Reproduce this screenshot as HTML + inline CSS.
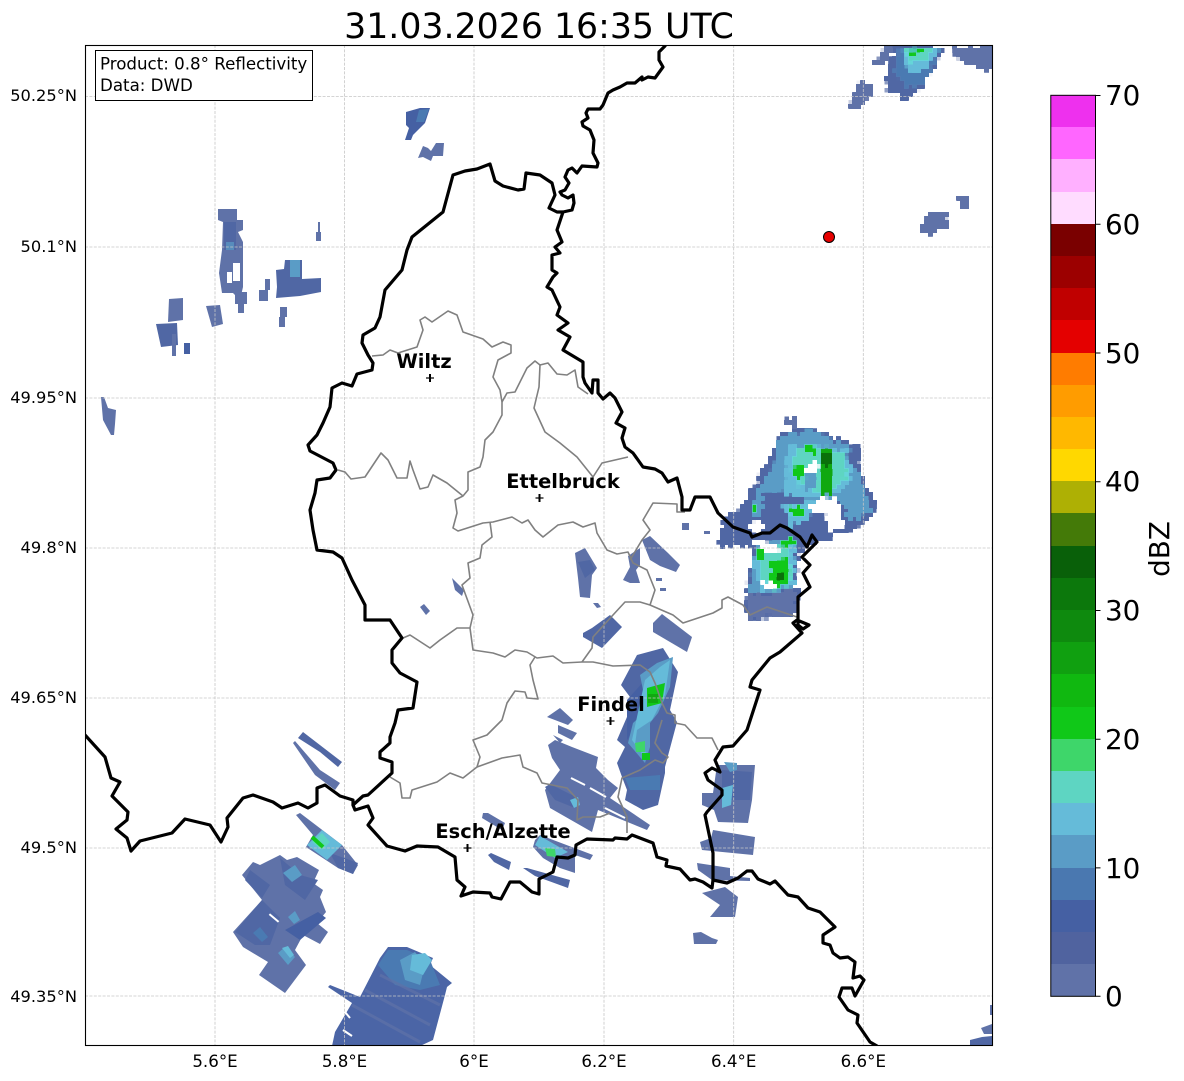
<!DOCTYPE html>
<html lang="en"><head><meta charset="utf-8"><title>Radar</title>
<style>
html,body{margin:0;padding:0;background:#fff}
svg{display:block}
text{font-family:"DejaVu Sans",sans-serif;fill:#000}
.t{font-size:16.67px}
.y{font-size:16.25px}
.c{font-size:19.44px;font-weight:bold}
.b{font-size:27.78px}
.a{fill:#5f72a8}.n{fill:#5067a4}.h{fill:#4560a3}.d{fill:#4a7ab2}.e{fill:#5a9cc6}.f{fill:#65bbd9}.g{fill:#5ed5c2}.l{fill:#3ed66a}.i{fill:#10c818}.j{fill:#10a810}.k{fill:#0a700a}.w{fill:#fff}
.bd{fill:none;stroke:#000;stroke-width:3.2;stroke-linejoin:round;stroke-linecap:round}
.gr{fill:none;stroke:#808080;stroke-width:1.6;stroke-linejoin:round}
.gl{stroke:#c6c6c6;stroke-width:.8;stroke-dasharray:3 1.4;fill:none}
</style></head><body>
<svg width="1184" height="1081" viewBox="0 0 1184 1081" xmlns="http://www.w3.org/2000/svg">
<defs>
<filter id="r" filterUnits="userSpaceOnUse" x="700" y="40" width="300" height="600" color-interpolation-filters="sRGB"><feTurbulence type="fractalNoise" baseFrequency=".16" numOctaves="1" seed="4" result="n"/><feDisplacementMap in="SourceGraphic" in2="n" scale="11" xChannelSelector="R" yChannelSelector="G" result="s"/><feFlood x="702" y="42" width="1" height="1" flood-color="#000"/><feComposite x="700" y="40" width="4" height="4"/><feTile x="700" y="40" width="300" height="600" result="p"/><feComposite in="s" in2="p" operator="in" x="700" y="40" width="300" height="600"/><feMorphology operator="dilate" radius="2" x="700" y="40" width="300" height="600"/></filter>
<clipPath id="ax"><rect x="85" y="45" width="908" height="1001"/></clipPath>
</defs>
<rect width="1184" height="1081" fill="#fff"/>
<text x="539" y="38" text-anchor="middle" style="font-size:34.72px">31.03.2026 16:35 UTC</text>

<g clip-path="url(#ax)">
<!-- pixelated storms -->
<g filter="url(#r)">
<polygon class="n" points="895,46 943,46 940,60 927,77 923,90 908,97 905,103 902,100 900,93 888,90 885,80 892,63"/>
<polygon class="d" points="898,50 940,47 931,66 924,82 906,88 895,72"/>
<polygon class="f" points="902,50 938,48 926,68 908,72"/>
<polygon class="g" points="906,50 934,48 925,62 910,62"/>
<polygon class="i" points="908,50 926,48 922,54 912,55"/>
<polygon class="a" points="950,46 992,46 992,70 975,68 957,57"/>
<polygon class="a" points="890,47 872,62 880,66 890,56"/>
<polygon class="a" points="850,107 858,82 873,88 870,98 860,107"/>
<polygon class="a" points="918,232 930,212 947,212 945,228 925,236"/>
<rect class="a" x="960" y="198" width="9" height="9"/>
<rect class="a" x="787" y="417" width="9" height="8"/>
<polygon class="n" points="780,433 810,428 825,435 847,442 859,447 859,467 867,487 875,502 873,515 857,527 833,537 817,542 807,547 798,557 793,587 798,590 798,613 763,618 748,620 747,597 752,560 755,547 718,547 722,530 728,515 742,507 753,487 768,463 777,443"/>
<polygon class="e" points="782,436 810,431 847,446 857,450 857,470 866,497 870,512 847,523 843,500 810,500 787,510 783,520 755,517 750,510 758,493 770,472 778,457 775,445"/>
<polygon class="n" points="762,492 800,485 805,500 790,507 787,522 757,522 763,505"/>
<polygon class="n" points="848,452 858,448 860,470 850,470"/>
<polygon class="f" points="788,447 845,450 852,470 845,490 810,498 785,495 786,470"/>
<polygon class="g" points="798,447 845,452 847,475 830,495 800,487 792,465"/>
<polygon class="e" points="803,470 818,468 815,490 805,490"/>
<polygon class="f" points="785,505 815,500 808,520 790,525"/>
<polygon class="i" points="803,445 815,445 815,455 803,455"/>
<polygon class="j" points="820,448 833,448 834,480 830,497 820,497"/>
<polygon class="k" points="821,455 832,455 832,468 821,468"/>
<polygon class="i" points="792,465 805,465 805,478 793,478"/>
<polygon class="i" points="788,507 807,505 805,516 790,517"/>
<polygon class="i" points="752,505 758,505 758,512 752,512"/>
<polygon class="i" points="843,452 848,452 848,458 843,458"/>
<polygon class="e" points="757,545 795,537 795,560 790,590 750,592"/>
<polygon class="f" points="753,560 768,550 795,545 793,585 760,590"/>
<polygon class="g" points="760,552 790,545 792,580 775,590 760,575"/>
<polygon class="i" points="769,560 790,558 788,585 770,586"/>
<polygon class="k" points="776,570 785,570 783,583 776,583"/>
<polygon class="i" points="756,550 766,550 765,560 757,560"/>
<polygon class="i" points="780,538 797,538 795,547 780,546"/>
<polygon class="a" points="748,596 795,592 797,612 763,617 749,619"/>
<polygon class="w" points="806,463 817,463 819,472 807,473"/>
<polygon class="w" points="808,505 822,498 837,499 843,517 843,530 830,530 828,515 815,513"/>
<polygon class="w" points="750,523 765,522 768,530 752,530"/>
<polygon class="w" points="752,540 770,542 780,552 762,550"/>
<polygon class="w" points="760,582 775,586 770,590"/>
</g>

<!-- top small -->
<polygon class="h" points="406,112 420,108 430,108 425,123 413,135 411,140 405,140 409,128 406,125"/>
<polygon class="d" points="419,110 429,109 424,122 416,122"/>
<polygon class="a" points="418,158 423,146 428,148 431,151 436,143 444,143 443,156 433,156 431,161 423,157"/>
<!-- west -->
<polygon class="a" points="218,209 237,209 237,220 243,220 243,230 238,232 243,242 243,287 240,300 233,293 222,293 219,273 222,250 223,222 218,220"/>
<rect class="n" x="224" y="222" width="12" height="28"/><rect class="e" x="226" y="242" width="8" height="8" opacity=".7"/>
<rect class="w" x="227" y="272" width="5" height="11"/><rect class="w" x="233" y="263" width="7" height="18"/>
<rect class="a" x="235" y="292" width="12" height="12"/><rect class="a" x="238" y="303" width="6" height="10"/>
<polygon class="a" points="206,306 220,305 223,324 212,327"/>
<polygon class="a" points="169,299 183,298 183,320 168,322"/>
<polygon class="n" points="156,324 177,323 178,345 161,347"/>
<rect class="a" x="172" y="334" width="4" height="22"/><rect class="h" x="184" y="343" width="6" height="11"/>
<rect class="a" x="259" y="290" width="9" height="11"/><rect class="a" x="265" y="279" width="5" height="11"/>
<polygon class="n" points="277,287 276,270 284,269 285,260 302,260 302,279 321,278 321,292 300,296 276,298"/>
<rect class="e" x="290" y="260" width="10" height="17"/>
<rect class="a" x="316" y="232" width="5" height="9"/><rect class="a" x="318" y="222" width="2" height="10"/>
<rect class="a" x="280" y="307" width="7" height="10"/><rect class="a" x="279" y="317" width="6" height="10"/>
<polygon class="a" points="101,397 104,397 108,408 116,410 115,424 114,435 111,435 103,420"/>
<!-- SW bands -->
<polygon class="n" points="298,738 303,732 342,762 338,767 320,752"/>
<polygon class="a" points="293,743 295,741 320,770 340,783 335,790 315,775"/>
<polygon class="a" points="296,815 300,813 342,845 358,865 353,874 338,868 306,847 313,835"/>
<polygon class="n" points="330,853 358,863 353,874 338,868"/>
<polygon class="f" points="307,845 322,830 342,845 327,860"/>
<polygon class="g" points="312,842 322,833 330,842 322,850"/>
<line x1="312" y1="837" x2="323" y2="847" stroke="#10c818" stroke-width="4"/>
<polygon class="a" points="242,875 253,862 260,865 280,855 287,860 297,857 319,870 313,883 323,890 320,897 326,912 317,923 328,932 320,944 303,935 295,950 306,965 285,993 259,975 268,962 243,947 233,932 262,900"/>
<polygon class="n" points="235,932 262,900 280,918 270,945 255,945"/>
<polygon class="n" points="280,858 300,875 318,880 305,900 285,885"/>
<polygon class="n" points="250,870 270,885 262,898 245,880"/>
<polygon class="h" points="285,930 318,912 326,918 300,940"/>
<polygon class="e" points="283,873 295,865 302,875 292,882"/>
<polygon class="d" points="253,933 260,927 268,937 262,942"/>
<polygon class="e" points="278,953 285,947 295,957 288,965"/>
<polygon class="f" points="282,948 288,946 294,955 290,958"/>
<polygon class="e" points="288,917 295,911 300,920 294,924"/>
<rect class="w" x="268" y="917" width="12" height="2" transform="rotate(40 274 918)"/>
<polygon fill="#4b65a6" points="332,1046 335,1032 352,1003 328,987 330,985 360,997 380,958 388,947 407,947 433,958 430,965 452,983 447,987 445,995 433,1040 420,1046"/>
<polygon class="d" points="378,965 388,950 407,950 430,960 440,985 420,990 395,985"/>
<polygon class="e" points="400,960 415,952 425,965 420,985 405,980"/>
<polygon class="f" points="412,955 425,953 432,960 423,975 410,970"/>
<g stroke="#5f72a8" stroke-width="3" opacity=".7"><line x1="365" y1="990" x2="430" y2="1025"/><line x1="352" y1="1005" x2="420" y2="1042"/><line x1="380" y1="975" x2="440" y2="1005"/></g>
<g stroke="#fff" stroke-width="2"><line x1="343" y1="1030" x2="352" y2="1036"/><line x1="345" y1="1012" x2="350" y2="1018"/></g>
<!-- right small -->
<polygon class="n" points="970,1040 982,1037 992,1036 992,1046 970,1046"/>
<polygon class="a" points="981,1028 992,1024 992,1034 984,1034"/>
<rect class="a" x="990" y="1005" width="3" height="10"/>
<!-- center -->
<polygon class="a" points="653,623 662,614 692,637 687,652 653,632"/>
<polygon class="n" points="583,633 592,628 610,615 622,627 602,648 583,637"/>
<polygon class="n" points="637,655 663,648 678,672 670,710 677,722 665,767 665,773 658,805 643,810 625,800 627,790 622,777 617,763 625,747 617,740 630,710 630,697 621,685"/>
<polygon class="h" points="627,700 645,680 650,700 640,720 627,740"/>
<polygon class="e" points="640,675 657,663 673,657 670,687 658,713 650,723 650,747 645,763 628,743 633,723 647,710 643,690"/>
<polygon class="f" points="645,680 660,667 670,660 665,695 652,720 637,730 635,745 650,755 643,755 632,740"/>
<polygon class="i" points="647,688 665,683 662,703 647,707"/>
<polygon class="j" points="648,694 658,694 658,703 648,703"/>
<polygon class="l" points="635,743 645,741 645,752 636,752"/>
<polygon class="i" points="642,753 650,753 650,760 642,760"/>
<polygon class="d" points="625,778 660,775 660,790 630,790"/>
<polygon class="a" points="547,717 560,708 573,720 568,725"/>
<polygon class="a" points="558,725 577,733 572,740 558,733"/>
<polygon class="a" points="553,735 563,740 560,743"/>
<polygon class="a" points="548,745 555,740 572,747 598,757 596,768 608,780 618,788 610,798 650,825 647,830 598,810 592,832 550,808 545,790 560,770 552,758"/>
<polygon class="n" points="545,787 550,784 578,798 575,808 555,800"/>
<polygon class="f" points="570,800 578,797 580,805 574,808"/>
<g stroke="#fff" stroke-width="2"><line x1="571" y1="778" x2="585" y2="785"/><line x1="590" y1="788" x2="606" y2="797"/><line x1="605" y1="808" x2="625" y2="818"/></g>
<polygon class="a" points="717,765 755,765 752,800 748,823 718,822 714,810 702,805 702,793 713,793"/>
<polygon class="n" points="722,770 752,772 750,800 722,800"/>
<polygon class="e" points="724,762 737,763 737,770 730,772"/>
<polygon class="f" points="722,788 733,785 731,805 722,808"/>
<polygon class="a" points="713,830 755,837 753,855 702,850 700,842 711,838"/>
<polygon class="a" points="697,863 730,868 730,876 750,878 750,881 712,880 698,870"/>
<polygon class="a" points="702,893 725,887 738,897 735,917 710,917 720,905"/>
<polygon class="a" points="693,933 701,932 712,938 718,940 716,944 694,944"/>
<!-- Esch -->
<polygon class="a" points="483,813 488,813 505,823 502,830 482,818"/>
<polygon class="n" points="488,855 491,853 511,862 509,870 494,862"/>
<polygon class="n" points="523,868 527,868 570,880 568,888 535,876"/>
<polygon class="a" points="535,840 540,835 593,855 590,860 575,855 575,873 560,868 543,858 533,847"/>
<polygon class="f" points="535,845 540,836 568,852 555,858"/>
<polygon class="l" points="545,848 555,849 556,857 547,856"/>
<!-- mid north -->
<polygon class="a" points="642,540 650,536 668,553 680,565 676,572 660,566 650,560"/>
<polygon class="a" points="623,580 630,567 628,556 640,548 640,565 636,570 640,583 630,583"/>
<rect class="a" x="682" y="523" width="7" height="7"/><rect class="a" x="704" y="531" width="6" height="3"/>
<rect class="a" x="656" y="578" width="6" height="3"/><rect class="a" x="660" y="588" width="6" height="3"/>
<polygon class="a" points="575,553 585,548 597,568 592,575 590,598 580,597 578,578"/>
<polygon class="n" points="578,562 590,560 595,570 585,578"/>
<polygon class="a" points="420,607 424,604 430,611 426,615"/>
<polygon class="a" points="452,578 456,582 464,590 462,596 455,590"/>
<polygon class="a" points="593,603 598,603 601,607 597,608"/>
</g>

<g class="gl" clip-path="url(#ax)">
<path d="M215 45V1046M344.500 45V1046M474 45V1046M604 45V1046M733.700 45V1046M863.300 45V1046"/>
<path d="M85 96.500H993M85 247H993M85 398H993M85 548H993M85 698H993M85 848H993M85 996H993"/>
</g>

<g clip-path="url(#ax)">
<!-- gray cantons -->
<path class="gr" d="M372 356L383 355 390 350 398 353 417 347 423 330 420 320 425 317 432 322 448 311 457 315 463 332 483 339 492 347 503 342 511 345 511 353 498 360 493 377 500 390 502 402 502 415 493 432 485 440 483 457 480 467 468 472 468 490 463 496 455 500 457 513 453 528 458 531 483 523 493 522 512 517 522 523 528 520 535 530 543 537 558 525 573 522 583 527 595 523 597 533 607 550 617 554 628 552 633 563 647 570 655 590 650 605"/>
<path class="gr" d="M502 402L507 393 515 392 527 368 535 361 540 365 548 363 557 374 567 375 575 370 578 387 588 394"/>
<path class="gr" d="M540 365L539 387 534 408 545 432 560 443 577 457 593 477 602 463 628 457"/>
<path class="gr" d="M338 470L345 472 351 479 365 477 381 453 388 460 397 478 407 478 410 461 413 470 420 489 428 487 433 475 447 483 463 496"/>
<path class="gr" d="M490 522L492 537 482 545 480 558 468 563 470 578 462 585 473 615 470 628 473 650 493 653 505 657 515 650 527 652 537 658 553 656 563 663 582 662 593 662 613 666 640 665 650 672 655 683 662 703 667 713 675 715 675 723 685 725 697 738 712 738 718 750"/>
<path class="gr" d="M470 628L457 628 440 640 430 648 410 635 403 638"/>
<path class="gr" d="M535 657L530 665 533 680 538 699 527 698 525 692 515 691 507 703 502 720 487 735 473 740 480 757 477 767 463 778 450 773 437 782 412 790 410 798 402 798 400 783 390 777"/>
<path class="gr" d="M477 767L502 758 520 755 523 767 537 773 542 783 567 788 578 800 577 820 583 817 600 817 610 813"/>
<path class="gr" d="M582 662L592 648 593 637 613 615 625 602 640 602 650 605 673 615 683 623 713 613 722 608 722 600 728 597 743 605 750 615 767 607 797 617"/>
<path class="gr" d="M630 560L642 540 650 530 643 520 653 503 677 504 677 512 685 512"/>
<path class="gr" d="M662 720L655 743 662 753 668 757 663 763 655 760 640 770 622 778 618 797 627 817 627 833"/>
<!-- black -->
<path class="bd" d="M665 46L659 52 659 60 663 67 655 78 648 77 642 80 642 77 635 83 627 83 620 87 613 90 608 93 603 105 600 109 588 109 586 113 588 118 582 122 583 126 590 130 594 140 593 153 598 163 597 167 582 166 577 173 572 168 568 170 565 177 569 183 565 190 560 192 562 195 568 198 573 195 574 203 572 210 563 212 557 212 549 208 555 195 552 183 540 175 526 173 524 189 518 190 503 186 495 181 490 164 477 169 465 171 453 175 443 212 412 237 407 250 402 270 385 290 380 317 375 328 363 335 362 343 368 355 373 363 372 370 357 374 352 386 342 383 332 388 330 407 323 423 317 435 308 445 310 451 333 463 336 470 330 478 317 480 315 493 310 510 313 530 317 550 333 552 342 558 352 580 365 605 365 620 380 620 390 620 402 638 392 650 392 663 400 673 417 682 413 708 398 710 395 723 390 737 390 743 380 752 380 758 392 762 392 773 368 795 363 796 353 805 355 810 368 806 373 818 368 825 387 846 405 851 417 846 438 847 455 857 457 880 465 887 461 896 473 892 490 893 492 897 501 899 510 882 520 882 532 892 539 894 539 879 553 872 557 857 568 858 575 855 576 845 587 839 613 840 615 838 627 839 632 835 653 843 657 857 667 860 666 866 680 869 690 880 695 879 703 882 712 888 713 880 713 853 705 815 707 812 722 795 722 790 708 780 705 773 712 768 720 772 715 760 723 747 733 746 747 730 760 690 750 687 752 680 770 658 780 652 802 633 793 623 797 620 809 625 803 629 798 625 798 617 798 597 810 587 803 573 810 565 802 557 817 542 812 535 807 547 800 537 787 528 780 525 770 533 762 533 752 537 750 533 733 527 718 513 710 497 695 497 690 510 682 510 682 497 677 478 668 482 662 473 655 469 643 467 633 453 625 447 622 438 625 428 616 423 622 412 615 398 610 393 603 399 598 393 598 380 593 380 592 393 585 383 583 377 583 362 563 350 570 337 558 330 568 323 557 315 560 307 552 290 547 287 553 277 557 273 552 270 552 255 560 253 555 247 562 242 557 230 563 212"/>
<path class="bd" d="M353 805L353 800 340 796 325 785 317 788 317 803 308 808 298 803 282 808 273 802 253 795 243 798 235 808 227 818 228 827 221 842 210 825 185 819 172 833 140 841 131 851 127 838 116 829 127 820 128 812 112 796 120 782 111 778 105 757 85 735"/>
<path class="bd" d="M713 880L727 883 738 878 747 871 752 871 758 879 770 884 775 881 788 895 798 897 808 908 820 912 835 927 823 935 823 943 830 945 833 953 840 958 848 957 855 962 853 978 860 976 864 980 855 996 852 988 842 988 839 997 848 1010 858 1015 857 1023 870 1042 877 1046"/>
</g>

<!-- red marker -->
<circle cx="829" cy="237" r="5.500" fill="#e60000" stroke="#000" stroke-width="1"/>
<!-- cities -->
<g stroke="#000" fill="none">
<path d="M430 374V382" stroke-width="2"/><path d="M426 378H434" stroke-width="1.200"/>
<path d="M539.500 494V502" stroke-width="2"/><path d="M535.500 498H543.500" stroke-width="1.200"/>
<path d="M610.500 717V725" stroke-width="2"/><path d="M606.500 721H614.500" stroke-width="1.200"/>
<path d="M467.500 844V852" stroke-width="2"/><path d="M463.500 848H471.500" stroke-width="1.200"/>
</g>
<text class="c" x="424" y="368" text-anchor="middle">Wiltz</text>
<text class="c" x="563" y="488" text-anchor="middle">Ettelbruck</text>
<text class="c" x="611" y="711" text-anchor="middle">Findel</text>
<text class="c" x="503" y="838" text-anchor="middle">Esch/Alzette</text>

<!-- frame -->
<rect x="85.500" y="45.500" width="907" height="1000" fill="none" stroke="#000" stroke-width="1.100"/>
<!-- info -->
<rect x="95.500" y="50.500" width="217" height="50" fill="#fff" stroke="#000" stroke-width="1"/>
<text class="t" x="100" y="69.500">Product: 0.8° Reflectivity</text>
<text class="t" x="100" y="91">Data: DWD</text>

<!-- axis labels -->
<g class="y" text-anchor="end">
<text x="77" y="101">50.25°N</text>
<text x="77" y="252">50.1°N</text>
<text x="77" y="403">49.95°N</text>
<text x="77" y="553">49.8°N</text>
<text x="77" y="703">49.65°N</text>
<text x="77" y="853">49.5°N</text>
<text x="77" y="1002">49.35°N</text>
</g>
<g class="t" text-anchor="middle">
<text x="215" y="1067">5.6°E</text>
<text x="344.500" y="1067">5.8°E</text>
<text x="474" y="1067">6°E</text>
<text x="604" y="1067">6.2°E</text>
<text x="733.700" y="1067">6.4°E</text>
<text x="863.300" y="1067">6.6°E</text>
</g>

<!-- colorbar -->
<g shape-rendering="crispEdges">
<rect x="1051" y="95" width="45" height="33" fill="#ee30ee"/>
<rect x="1051" y="127" width="45" height="33" fill="#ff66ff"/>
<rect x="1051" y="159" width="45" height="33" fill="#ffb0ff"/>
<rect x="1051" y="192" width="45" height="33" fill="#ffdcff"/>
<rect x="1051" y="224" width="45" height="33" fill="#7a0000"/>
<rect x="1051" y="256" width="45" height="33" fill="#9c0000"/>
<rect x="1051" y="288" width="45" height="33" fill="#c00000"/>
<rect x="1051" y="320" width="45" height="33" fill="#e40000"/>
<rect x="1051" y="353" width="45" height="33" fill="#ff7c00"/>
<rect x="1051" y="385" width="45" height="33" fill="#ff9c00"/>
<rect x="1051" y="417" width="45" height="33" fill="#ffb800"/>
<rect x="1051" y="449" width="45" height="33" fill="#ffd800"/>
<rect x="1051" y="481" width="45" height="33" fill="#aeb004"/>
<rect x="1051" y="513" width="45" height="33" fill="#447a08"/>
<rect x="1051" y="546" width="45" height="33" fill="#096009"/>
<rect x="1051" y="578" width="45" height="33" fill="#0c780c"/>
<rect x="1051" y="610" width="45" height="33" fill="#0e8a0e"/>
<rect x="1051" y="642" width="45" height="33" fill="#10a010"/>
<rect x="1051" y="674" width="45" height="33" fill="#10b810"/>
<rect x="1051" y="707" width="45" height="33" fill="#10c818"/>
<rect x="1051" y="739" width="45" height="33" fill="#3ed66a"/>
<rect x="1051" y="771" width="45" height="33" fill="#5ed5c2"/>
<rect x="1051" y="803" width="45" height="33" fill="#65bbd9"/>
<rect x="1051" y="835" width="45" height="33" fill="#5a9cc6"/>
<rect x="1051" y="868" width="45" height="33" fill="#4a78b0"/>
<rect x="1051" y="900" width="45" height="33" fill="#4560a3"/>
<rect x="1051" y="932" width="45" height="33" fill="#50639f"/>
<rect x="1051" y="964" width="45" height="32" fill="#6072a8"/>
</g>
<rect x="1050.800" y="95.300" width="44.700" height="901" fill="none" stroke="#000" stroke-width="1"/>
<path d="M1095.500 95.500h5M1095.500 224.300h5M1095.500 353h5M1095.500 481.700h5M1095.500 610.500h5M1095.500 739.200h5M1095.500 867.900h5M1095.500 996.200h5" stroke="#000" stroke-width="1" fill="none"/>
<g class="b">
<text x="1105" y="105">70</text>
<text x="1105" y="234">60</text>
<text x="1105" y="363">50</text>
<text x="1105" y="491">40</text>
<text x="1105" y="620">30</text>
<text x="1105" y="749">20</text>
<text x="1105" y="878">10</text>
<text x="1105" y="1006">0</text>
</g>
<text class="b" transform="translate(1169 549) rotate(-90)" text-anchor="middle">dBZ</text>
</svg>
</body></html>
